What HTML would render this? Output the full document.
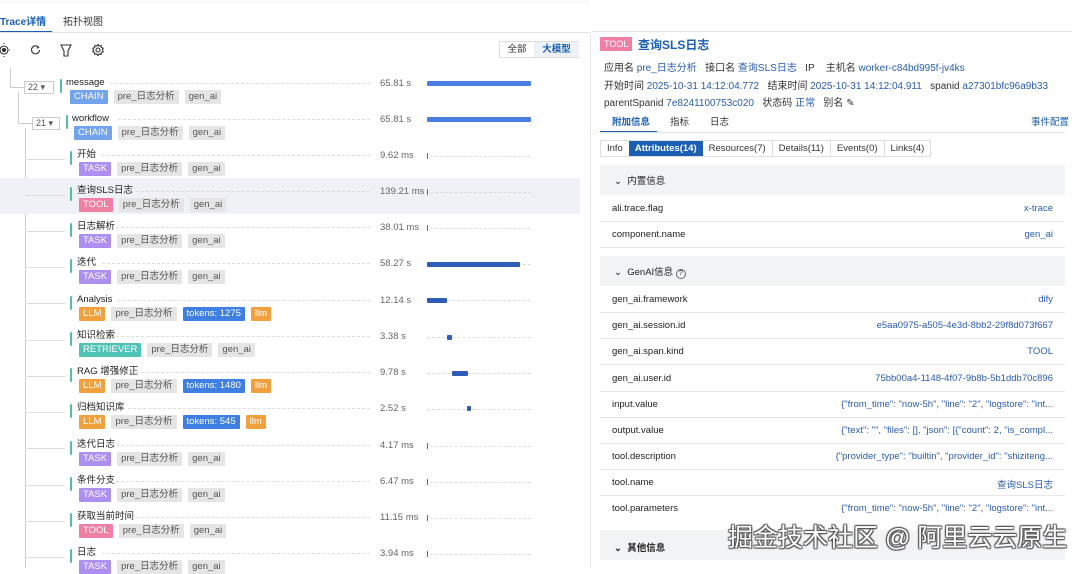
<!DOCTYPE html>
<html><head><meta charset="utf-8"><style>
*{margin:0;padding:0;box-sizing:border-box}
body{width:1080px;height:568px;overflow:hidden;background:#fff;font-family:"Liberation Sans","Noto Sans CJK SC",sans-serif;font-size:10px;color:#333;position:relative}
.a{position:absolute;white-space:nowrap}
.ttl{position:absolute;font-size:9.5px;color:#222;line-height:12px}
.bar{position:absolute;width:2px;height:14px;background:#52c09a;border-radius:1px}
.tags{position:absolute;display:flex;gap:6px}
.tg{height:14px;line-height:14px;padding:0 4px;font-size:9.5px;border-radius:1px;color:#fff}
.g{background:#e5e5e5;color:#555}
.ch{background:#73a3ea}.tk{background:#ad8ff0}.tl{background:#f07fa4}.lm{background:#f2a03c}.rt{background:#4fc3b6}.tok{background:#3e7fe3}
.dash{position:absolute;border-top:1px dashed #ddd;height:0}
.dur{position:absolute;left:380px;font-size:9.5px;color:#666}
.tb{position:absolute;height:5px;background:#3d6ed3;border-radius:1px}
.tick{position:absolute;width:1px;height:6px;background:#3d6ed3}
.hl{position:absolute;left:0;top:178px;width:580px;height:36px;background:#eef1f6}
.kv{position:absolute;left:600px;width:465px;height:26px;border-bottom:1px solid #e8e8e8;font-size:9.5px}
.kv .k{position:absolute;left:12px;top:7px;color:#222}
.kv .v{position:absolute;right:12px;top:7px;color:#2a5cb0}
.sec{position:absolute;left:600px;width:465px;height:30px;background:#f2f3f5;font-size:9.5px;color:#222}
.blue{color:#2a5cb0}
</style></head><body>
<div class="a" style="left:0;top:0;width:590px;height:4px;background:#fafafa"></div>
<div class="a" style="left:0;top:13px;font-size:10px;color:#1a5fb4;font-weight:bold">Trace详情</div>
<div class="a" style="left:63px;top:13px;font-size:10px;color:#333">拓扑视图</div>
<div class="a" style="left:0;top:31px;width:52px;height:2px;background:#1a5fb4"></div>
<div class="a" style="left:0;top:32px;width:590px;height:1px;background:#e5e5e5"></div>
<svg class="a" style="left:0;top:43px" width="110" height="16" viewBox="0 0 110 16" fill="none" stroke="#333" stroke-width="1.1">
<circle cx="4" cy="7" r="4"/><circle cx="4" cy="7" r="1.6" fill="#333"/><path d="M4 1v-1M4 13v1M10 7h-1"/>
<path d="M38.5 4.2A4 4 0 1 0 39.5 7" /><path d="M37 3l1.6 1.3-1.8.9"/>
<path d="M61 2h10l-3 6v5h-4V8z"/>
<circle cx="98" cy="7" r="2"/><path d="M98 1.5l1.2 1.5 1.9-.4.3 1.9 1.8.8-.8 1.7.8 1.7-1.8.8-.3 1.9-1.9-.4L98 12.5l-1.2-1.5-1.9.4-.3-1.9-1.8-.8.8-1.7-.8-1.7 1.8-.8.3-1.9 1.9.4z"/>
</svg>
<div class="a" style="left:499px;top:41px;width:80px;height:17px;border:1px solid #ddd;font-size:9.5px">
<span class="a" style="left:0;top:0;width:34px;height:15px;line-height:15px;text-align:center">全部</span>
<span class="a" style="left:34px;top:0;width:45px;height:15px;line-height:15px;text-align:center;background:#eef2f8;color:#1a5fb4;font-weight:bold">大模型</span></div>
<div class="a" style="left:590px;top:33px;width:1px;height:535px;background:#e5e5e5"></div>

<div class="a" style="left:10px;top:68px;width:1px;height:19px;background:#ccc"></div>
<div class="a" style="left:10px;top:87px;width:14px;height:1px;background:#ccc"></div>
<div class="a" style="left:18px;top:92px;width:1px;height:31px;background:#ccc"></div>
<div class="a" style="left:18px;top:123px;width:14px;height:1px;background:#ccc"></div>
<div class="a" style="left:25px;top:128px;width:1px;height:440px;background:#ccc"></div>
<div class="a" style="left:24px;top:81px;width:30px;height:13px;border:1px solid #ccc;font-size:9px;color:#555;line-height:11px;padding-left:3px">22 ▾</div>
<div class="a" style="left:32px;top:117px;width:28px;height:13px;border:1px solid #ccc;font-size:9px;color:#555;line-height:11px;padding-left:3px">21 ▾</div>

<div class="hl"></div>

<div class="bar" style="left:60px;top:79px"></div><div class="ttl" style="left:66px;top:77px">message</div><div class="dash" style="left:110px;top:83px;width:260px"></div>
<div class="tags" style="left:70px;top:90px"><span class="tg ch">CHAIN</span><span class="tg g">pre_日志分析</span><span class="tg g">gen_ai</span></div>
<div class="dur" style="top:78px">65.81 s</div><div class="tb" style="left:427px;top:81px;width:104px;background:#4a7ee0"></div>

<div class="bar" style="left:66px;top:115px"></div><div class="ttl" style="left:72px;top:113px">workflow</div><div class="dash" style="left:118px;top:119px;width:252px"></div>
<div class="tags" style="left:74px;top:126px"><span class="tg ch">CHAIN</span><span class="tg g">pre_日志分析</span><span class="tg g">gen_ai</span></div>
<div class="dur" style="top:114px">65.81 s</div><div class="tb" style="left:427px;top:117px;width:104px;background:#4a7ee0"></div>

<div class="a" style="left:25px;top:159px;width:40px;height:1px;background:#ddd"></div>
<div class="bar" style="left:70px;top:151px"></div><div class="ttl" style="left:77px;top:149px">开始</div><div class="dash" style="left:102px;top:155px;width:268px"></div>
<div class="tags" style="left:79px;top:162px"><span class="tg tk">TASK</span><span class="tg g">pre_日志分析</span><span class="tg g">gen_ai</span></div>
<div class="dur" style="top:150px">9.62 ms</div><div class="tick" style="left:427px;top:153px"></div><div class="dash" style="left:430px;top:156px;width:101px"></div>

<div class="a" style="left:25px;top:195px;width:40px;height:1px;background:#ddd"></div>
<div class="bar" style="left:70px;top:187px"></div><div class="ttl" style="left:77px;top:185px">查询SLS日志</div><div class="dash" style="left:136px;top:191px;width:234px"></div>
<div class="tags" style="left:79px;top:198px"><span class="tg tl">TOOL</span><span class="tg g">pre_日志分析</span><span class="tg g">gen_ai</span></div>
<div class="dur" style="top:186px">139.21 ms</div><div class="tick" style="left:427px;top:189px"></div><div class="dash" style="left:430px;top:192px;width:101px"></div>

<div class="a" style="left:25px;top:231px;width:40px;height:1px;background:#ddd"></div>
<div class="bar" style="left:70px;top:223px"></div><div class="ttl" style="left:77px;top:221px">日志解析</div><div class="dash" style="left:116px;top:227px;width:254px"></div>
<div class="tags" style="left:79px;top:234px"><span class="tg tk">TASK</span><span class="tg g">pre_日志分析</span><span class="tg g">gen_ai</span></div>
<div class="dur" style="top:222px">38.01 ms</div><div class="tick" style="left:427px;top:225px"></div><div class="dash" style="left:430px;top:228px;width:101px"></div>

<div class="a" style="left:25px;top:267px;width:40px;height:1px;background:#ddd"></div>
<div class="bar" style="left:70px;top:259px"></div><div class="ttl" style="left:77px;top:257px">迭代</div><div class="dash" style="left:102px;top:263px;width:268px"></div>
<div class="tags" style="left:79px;top:270px"><span class="tg tk">TASK</span><span class="tg g">pre_日志分析</span><span class="tg g">gen_ai</span></div>
<div class="dur" style="top:258px">58.27 s</div><div class="dash" style="left:427px;top:264px;width:104px"></div><div class="tb" style="left:427px;top:262px;width:93px;background:#2f5cb8"></div>

<div class="a" style="left:25px;top:303px;width:40px;height:1px;background:#ddd"></div>
<div class="bar" style="left:70px;top:296px"></div><div class="ttl" style="left:77px;top:294px">Analysis</div><div class="dash" style="left:118px;top:300px;width:252px"></div>
<div class="tags" style="left:79px;top:307px"><span class="tg lm">LLM</span><span class="tg g">pre_日志分析</span><span class="tg tok">tokens: 1275</span><span class="tg lm">llm</span></div>
<div class="dur" style="top:295px">12.14 s</div><div class="dash" style="left:427px;top:300px;width:104px"></div><div class="tb" style="left:427px;top:298px;width:20px;background:#2f5cb8"></div>

<div class="a" style="left:25px;top:340px;width:40px;height:1px;background:#ddd"></div>
<div class="bar" style="left:70px;top:332px"></div><div class="ttl" style="left:77px;top:330px">知识检索</div><div class="dash" style="left:116px;top:336px;width:254px"></div>
<div class="tags" style="left:79px;top:343px"><span class="tg rt">RETRIEVER</span><span class="tg g">pre_日志分析</span><span class="tg g">gen_ai</span></div>
<div class="dur" style="top:331px">3.38 s</div><div class="dash" style="left:427px;top:337px;width:104px"></div><div class="tb" style="left:447px;top:335px;width:5px;background:#2f5cb8"></div>

<div class="a" style="left:25px;top:376px;width:40px;height:1px;background:#ddd"></div>
<div class="bar" style="left:70px;top:368px"></div><div class="ttl" style="left:77px;top:366px">RAG 增强修正</div><div class="dash" style="left:136px;top:372px;width:234px"></div>
<div class="tags" style="left:79px;top:379px"><span class="tg lm">LLM</span><span class="tg g">pre_日志分析</span><span class="tg tok">tokens: 1480</span><span class="tg lm">llm</span></div>
<div class="dur" style="top:367px">9.78 s</div><div class="dash" style="left:427px;top:373px;width:104px"></div><div class="tb" style="left:452px;top:371px;width:16px;background:#2f5cb8"></div>

<div class="a" style="left:25px;top:412px;width:40px;height:1px;background:#ddd"></div>
<div class="bar" style="left:70px;top:404px"></div><div class="ttl" style="left:77px;top:402px">归档知识库</div><div class="dash" style="left:128px;top:408px;width:242px"></div>
<div class="tags" style="left:79px;top:415px"><span class="tg lm">LLM</span><span class="tg g">pre_日志分析</span><span class="tg tok">tokens: 545</span><span class="tg lm">llm</span></div>
<div class="dur" style="top:403px">2.52 s</div><div class="dash" style="left:427px;top:409px;width:104px"></div><div class="tb" style="left:467px;top:406px;width:4px;background:#2f5cb8"></div>

<div class="a" style="left:25px;top:448px;width:40px;height:1px;background:#ddd"></div>
<div class="bar" style="left:70px;top:441px"></div><div class="ttl" style="left:77px;top:439px">迭代日志</div><div class="dash" style="left:116px;top:445px;width:254px"></div>
<div class="tags" style="left:79px;top:452px"><span class="tg tk">TASK</span><span class="tg g">pre_日志分析</span><span class="tg g">gen_ai</span></div>
<div class="dur" style="top:440px">4.17 ms</div><div class="tick" style="left:427px;top:443px"></div><div class="dash" style="left:430px;top:446px;width:101px"></div>

<div class="a" style="left:25px;top:485px;width:40px;height:1px;background:#ddd"></div>
<div class="bar" style="left:70px;top:477px"></div><div class="ttl" style="left:77px;top:475px">条件分支</div><div class="dash" style="left:116px;top:481px;width:254px"></div>
<div class="tags" style="left:79px;top:488px"><span class="tg tk">TASK</span><span class="tg g">pre_日志分析</span><span class="tg g">gen_ai</span></div>
<div class="dur" style="top:476px">6.47 ms</div><div class="tick" style="left:427px;top:479px"></div><div class="dash" style="left:430px;top:482px;width:101px"></div>

<div class="a" style="left:25px;top:521px;width:40px;height:1px;background:#ddd"></div>
<div class="bar" style="left:70px;top:513px"></div><div class="ttl" style="left:77px;top:511px">获取当前时间</div><div class="dash" style="left:136px;top:517px;width:234px"></div>
<div class="tags" style="left:79px;top:524px"><span class="tg tl">TOOL</span><span class="tg g">pre_日志分析</span><span class="tg g">gen_ai</span></div>
<div class="dur" style="top:512px">11.15 ms</div><div class="tick" style="left:427px;top:515px"></div><div class="dash" style="left:430px;top:518px;width:101px"></div>

<div class="a" style="left:25px;top:557px;width:40px;height:1px;background:#ddd"></div>
<div class="bar" style="left:70px;top:549px"></div><div class="ttl" style="left:77px;top:547px">日志</div><div class="dash" style="left:102px;top:553px;width:268px"></div>
<div class="tags" style="left:79px;top:560px"><span class="tg tk">TASK</span><span class="tg g">pre_日志分析</span><span class="tg g">gen_ai</span></div>
<div class="dur" style="top:548px">3.94 ms</div><div class="tick" style="left:427px;top:551px"></div><div class="dash" style="left:430px;top:554px;width:101px"></div>

<div class="a" style="left:592px;top:31px;width:480px;height:1px;background:#e5e5e5"></div>
<div class="a tg tl" style="left:600px;top:37px;height:14px;line-height:14px;font-size:9px">TOOL</div>
<div class="a" style="left:638px;top:36px;font-size:12px;color:#1a5fb4;font-weight:bold">查询SLS日志</div>
<div class="a" style="left:604px;top:59px;font-size:10px;color:#333">应用名 <span class="blue">pre_日志分析</span>&nbsp;&nbsp;&nbsp;接口名 <span class="blue">查询SLS日志</span>&nbsp;&nbsp;&nbsp;IP&nbsp;&nbsp;&nbsp;&nbsp;主机名 <span class="blue">worker-c84bd995f-jv4ks</span></div>
<div class="a" style="left:604px;top:77px;font-size:10px;color:#333">开始时间 <span class="blue">2025-10-31 14:12:04.772</span>&nbsp;&nbsp;&nbsp;结束时间 <span class="blue">2025-10-31 14:12:04.911</span>&nbsp;&nbsp;&nbsp;spanid <span class="blue">a27301bfc96a9b33</span></div>
<div class="a" style="left:604px;top:94px;font-size:10px;color:#333">parentSpanid <span class="blue">7e8241100753c020</span>&nbsp;&nbsp;&nbsp;状态码 <span class="blue">正常</span>&nbsp;&nbsp;&nbsp;别名 ✎</div>
<div class="a" style="left:612px;top:114px;font-size:9.5px;color:#1a5fb4;font-weight:bold">附加信息</div>
<div class="a" style="left:670px;top:114px;font-size:9.5px">指标</div>
<div class="a" style="left:710px;top:114px;font-size:9.5px">日志</div>
<div class="a" style="left:1031px;top:114px;font-size:9.5px;color:#1a5fb4">事件配置</div>
<div class="a" style="left:600px;top:131px;width:57px;height:2px;background:#1a5fb4"></div>
<div class="a" style="left:600px;top:132px;width:465px;height:1px;background:#e5e5e5"></div>
<div class="a" style="left:600px;top:140px;height:17px;display:flex;border:1px solid #ddd;font-size:9.5px;line-height:15px">
<span style="padding:0 6px">Info</span><span style="padding:0 6px;background:#1a5fb4;color:#fff;font-weight:bold">Attributes(14)</span><span style="padding:0 6px;border-right:1px solid #ddd">Resources(7)</span><span style="padding:0 6px;border-right:1px solid #ddd">Details(11)</span><span style="padding:0 6px;border-right:1px solid #ddd">Events(0)</span><span style="padding:0 6px">Links(4)</span></div>

<div class="sec" style="top:165px"><span class="a" style="left:14px;top:8px">⌄&nbsp;&nbsp;内置信息</span></div>
<div class="kv" style="top:196px"><span class="k">ali.trace.flag</span><span class="v">x-trace</span></div>
<div class="kv" style="top:222px"><span class="k">component.name</span><span class="v">gen_ai</span></div>
<div class="sec" style="top:256px"><span class="a" style="left:14px;top:8px">⌄&nbsp;&nbsp;GenAI信息 <span style="display:inline-block;width:10px;height:10px;border:1px solid #666;border-radius:50%;font-size:7px;text-align:center;line-height:8px">?</span></span></div>
<div class="kv" style="top:287px"><span class="k">gen_ai.framework</span><span class="v">dify</span></div>
<div class="kv" style="top:313px"><span class="k">gen_ai.session.id</span><span class="v">e5aa0975-a505-4e3d-8bb2-29f8d073f667</span></div>
<div class="kv" style="top:339px"><span class="k">gen_ai.span.kind</span><span class="v">TOOL</span></div>
<div class="kv" style="top:366px"><span class="k">gen_ai.user.id</span><span class="v">75bb00a4-1148-4f07-9b8b-5b1ddb70c896</span></div>
<div class="kv" style="top:392px"><span class="k">input.value</span><span class="v">{"from_time": "now-5h", "line": "2", "logstore": "int...</span></div>
<div class="kv" style="top:418px"><span class="k">output.value</span><span class="v">{"text": "", "files": [], "json": [{"count": 2, "is_compl...</span></div>
<div class="kv" style="top:444px"><span class="k">tool.description</span><span class="v">{"provider_type": "builtin", "provider_id": "shiziteng...</span></div>
<div class="kv" style="top:470px"><span class="k">tool.name</span><span class="v">查询SLS日志</span></div>
<div class="kv" style="top:496px;border-bottom:none"><span class="k">tool.parameters</span><span class="v">{"from_time": "now-5h", "line": "2", "logstore": "int...</span></div>
<div class="sec" style="top:530px"><span class="a" style="left:14px;top:10px;font-weight:bold">⌄&nbsp;&nbsp;其他信息</span></div>

<div class="a" style="left:728px;top:518px;font-size:25px;color:#fff;text-shadow:0 0 1px #555,1px 1px 1px #555,-1px -1px 1px #555,1px -1px 1px #555,-1px 1px 1px #555">掘金技术社区 @ 阿里云云原生</div>
</body></html>
